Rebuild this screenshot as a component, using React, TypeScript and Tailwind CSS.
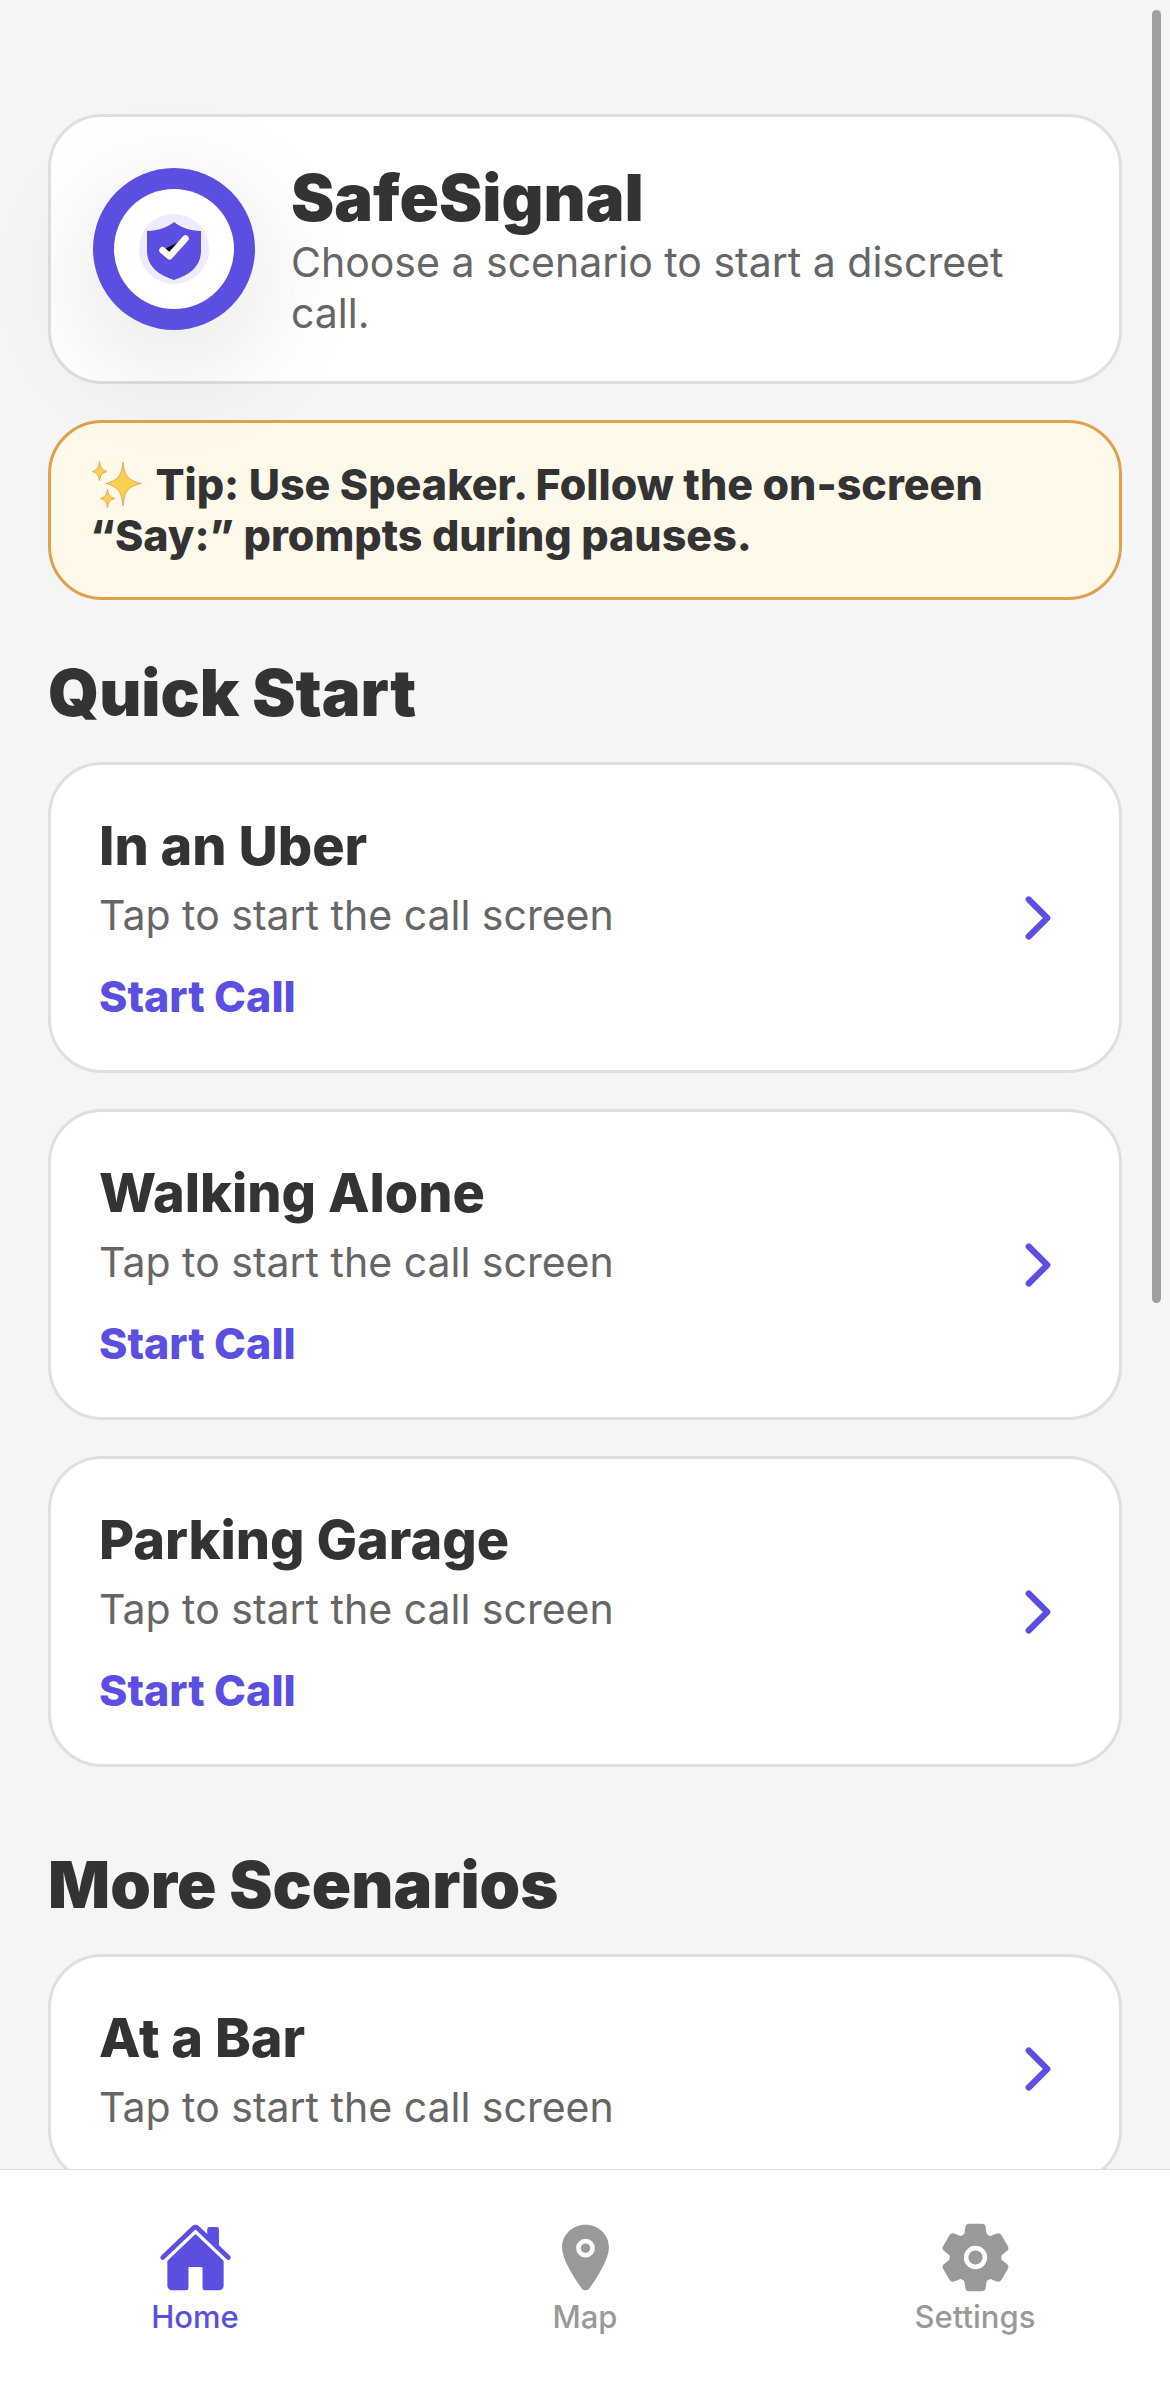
import { useState } from "react";
import {
  IoChevronForward,
  IoHome,
  IoLocation,
  IoSettings,
} from "react-icons/io5";

const quickStart = ["In an Uber", "Walking Alone", "Parking Garage"];
const moreScenarios = ["At a Bar"];

const tabs = [
  { name: "Home", icon: IoHome },
  { name: "Map", icon: IoLocation },
  { name: "Settings", icon: IoSettings },
];

const App = () => {
  const [activeTab, setActiveTab] = useState("Home");

  return (
    <div className="relative flex h-screen flex-col bg-[#f5f5f5] font-['Inter',sans-serif] text-[#333333]">
      <main className="min-h-0 flex-1 overflow-y-auto px-12 pt-[114px] [scrollbar-width:none]">
        <header className="flex items-center gap-9 rounded-[54px] border-3 border-[#dfdfdf] bg-white p-[42px]">
          <Logo />
          <div className="min-w-0 flex-1">
            <h1 className="text-[65px] leading-[78px] font-black">
              SafeSignal
            </h1>
            <p className="text-[41px] leading-[51px] text-[#666666]">
              Choose a scenario to start a discreet call.
            </p>
          </div>
        </header>

        <p className="mt-9 rounded-[54px] border-3 border-[#e0a04e] bg-[#fff9e9] px-[39px] py-9 text-[43px] leading-[51px] font-extrabold">
          <Sparkles /> Tip: Use Speaker. Follow the on-screen “Say:” prompts
          during pauses.
        </p>

        <section className="mt-[50px]">
          <SectionTitle title="Quick Start" />
          <div className="flex flex-col gap-9">
            {quickStart.map((title) => (
              <ScenarioCard key={title} title={title} action="Start Call" />
            ))}
          </div>
        </section>

        <section className="mt-[75px]">
          <SectionTitle title="More Scenarios" />
          <div className="flex flex-col gap-9">
            {moreScenarios.map((title) => (
              <ScenarioCard key={title} title={title} />
            ))}
          </div>
        </section>
      </main>

      {/* Scroll indicator */}
      <div className="absolute top-[10px] right-[9px] h-[1293px] w-[9px] rounded-full bg-[#9f9f9f]" />

      <nav className="grid h-[222px] shrink-0 grid-cols-3 border-t border-[#dcdcdc] bg-white">
        {tabs.map(({ name, icon: Icon }) => (
          <button
            key={name}
            type="button"
            onClick={() => setActiveTab(name)}
            className={`flex flex-col items-center gap-1 pt-[50px] ${
              activeTab === name ? "text-[#5a4fe0]" : "text-[#999999]"
            }`}
          >
            <Icon className="size-[75px]" />
            <span className="text-[31px] leading-9 font-medium">{name}</span>
          </button>
        ))}
      </nav>
    </div>
  );
};

export default App;

// Reusable components
const SectionTitle = ({ title }: { title: string }) => (
  <h2 className="mb-[27px] text-[65px] leading-[85px] font-black">{title}</h2>
);

const ScenarioCard = ({ title, action }: { title: string; action?: string }) => (
  <button
    type="button"
    className="flex w-full items-center justify-between rounded-[54px] border-3 border-[#dfdfdf] bg-white p-12 text-left"
  >
    <span className="flex flex-col">
      <span className="text-[54px] leading-[65px] font-extrabold">{title}</span>
      <span className="mt-3 text-[41px] leading-[51px] text-[#666666]">
        Tap to start the call screen
      </span>
      {action && (
        <span className="mt-[30px] text-[43px] leading-[51px] font-extrabold text-[#5a4fe0]">
          {action}
        </span>
      )}
    </span>
    <IoChevronForward className="size-[66px] text-[#5a4fe0]" />
  </button>
);

const Logo = () => (
  <div className="flex size-[162px] shrink-0 items-center justify-center rounded-full bg-[#5a4fe0] shadow-[0_30px_120px_rgba(0,0,0,0.12)]">
    <svg viewBox="0 0 120 120" className="size-[120px]" aria-hidden="true">
      <circle cx="60" cy="60" r="60" fill="#ffffff" />
      <circle cx="60" cy="60" r="35" fill="#eeebfd" />
      <path
        d="M60 33 C53 38.500 44 41.500 33 42 V62 C33 77 44 86 60 91 C76 86 87 77 87 62 V42 C76 41.500 67 38.500 60 33 Z"
        fill="#5a4fe0"
      />
      <path
        d="M48.500 61.300 L55.500 67.300 L71.500 49.500"
        stroke="#ffffff"
        strokeWidth="6.500"
        strokeLinecap="round"
        strokeLinejoin="round"
      />
    </svg>
  </div>
);

const Sparkles = () => (
  <svg
    viewBox="0 0 56 50"
    className="inline-block h-[50px] w-14 align-[-10px]"
    role="img"
    aria-label="Sparkles"
    fill="#f8d04e"
    stroke="#e8a765"
    strokeWidth="1"
  >
    <path d="M33 2 C34.500 15 37 20 51 23.500 C37 27 34.500 32 33 46 C31.500 32 29 27 16 23.500 C29 20 31.500 15 33 2 Z" />
    <path d="M9.500 1 C10.300 8 11.500 9.500 17 11.500 C11.500 13.500 10.300 15 9.500 21 C8.700 15 7.500 13.500 2.500 11.500 C7.500 9.500 8.700 8 9.500 1 Z" />
    <path d="M17.500 29 C18.300 35 19.500 36.500 24.500 38.500 C19.500 40.500 18.300 42 17.500 48 C16.700 42 15.500 40.500 10.500 38.500 C15.500 36.500 16.700 35 17.500 29 Z" />
  </svg>
);
